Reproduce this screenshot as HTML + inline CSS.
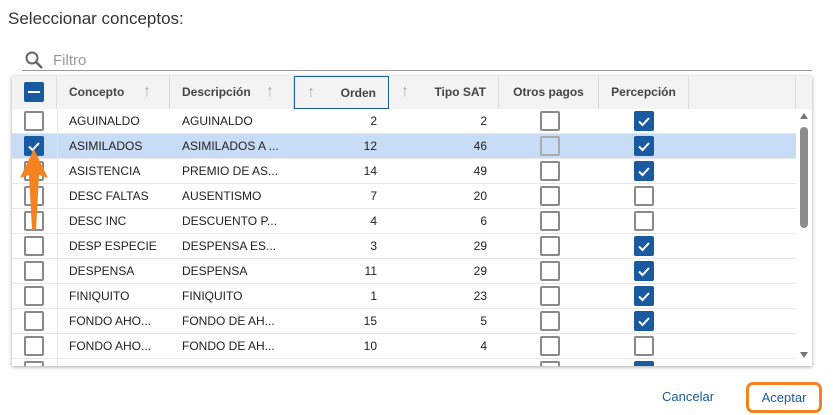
<!DOCTYPE html>
<html><head><style>
body{margin:0;width:833px;height:415px;background:#fff;font-family:"Liberation Sans",sans-serif;position:relative;overflow:hidden;color:#212121}
.a{position:absolute}
.title{left:8px;top:9px;font-size:17px;color:#333}
.grid{left:12px;top:76px;width:800px;height:290px;box-shadow:0 1px 4px rgba(0,0,0,.35);overflow:hidden;background:#fff}
.hdr{left:0;top:0;width:800px;height:33px;background:#f3f3f3;border-bottom:1px solid #ddd}
.hc{position:absolute;top:0;height:33px;line-height:32px;font-size:12px;font-weight:bold;color:#444;border-right:1px solid #ddd;box-sizing:border-box}
.row{position:absolute;left:0;width:784px;height:25px;border-bottom:1px solid #e6e6e6;box-sizing:border-box;font-size:12px;line-height:24px}
.c{position:absolute;top:0}
.cb{position:absolute;width:16px;height:16px;border:2px solid #8a8a8a;border-radius:2px;top:2px;background:#fff}
.ck{position:absolute;width:20px;height:20px;background:#1a5aa0;border-radius:2px;top:2px}
.ar{color:#aaa;font-weight:normal;position:absolute;font-size:16px}
</style></head><body>
<div class="a title">Seleccionar conceptos:</div>
<svg class="a" style="left:24px;top:50px" width="22" height="22"><circle cx="8" cy="8" r="5.5" fill="none" stroke="#666" stroke-width="2"/><line x1="12" y1="12" x2="18" y2="18" stroke="#666" stroke-width="2.5"/></svg>
<div class="a" style="left:53px;top:52px;font-size:15px;color:#999">Filtro</div>
<div class="a" style="left:22px;top:70px;width:790px;height:1px;background:#999"></div>
<div class="a grid">
 <div class="a hdr">
  <div class="hc" style="left:0;width:45px"><div class="ck" style="left:12px;top:6px"><div style="position:absolute;left:4px;top:9px;width:12px;height:2px;background:#fff"></div></div></div>
  <div class="hc" style="left:45px;width:113px;padding-left:12px">Concepto<span class="ar" style="left:86px">↑</span></div>
  <div class="hc" style="left:158px;width:124px;padding-left:12px">Descripción<span class="ar" style="left:96px">↑</span></div>
  <div class="hc" style="left:282px;width:95px;border:1px solid #1a5aa0;text-align:right;padding-right:12px">Orden<span class="ar" style="left:12px">↑</span></div>
  <div class="hc" style="left:377px;width:110px;text-align:right;padding-right:12px">Tipo SAT<span class="ar" style="left:12px">↑</span></div>
  <div class="hc" style="left:487px;width:100px;text-align:center">Otros pagos</div>
  <div class="hc" style="left:587px;width:90px;text-align:center">Percepción</div>
  <div class="hc" style="left:677px;width:107px"></div>
 </div>
 <div id="rows"></div>
 <div class="a" style="left:784px;top:33px;width:16px;height:257px;background:#fff"></div>
 <div class="a" style="left:788px;top:37px;width:0;height:0;border-left:4px solid transparent;border-right:4px solid transparent;border-bottom:6px solid #777"></div>
 <div class="a" style="left:788px;top:51px;width:8px;height:101px;border-radius:4px;background:#8c8c8c"></div>
 <div class="a" style="left:788px;top:276px;width:0;height:0;border-left:4px solid transparent;border-right:4px solid transparent;border-top:6px solid #777"></div>
</div>
<svg class="a" style="left:20px;top:148px" width="30" height="90"><path d="M14 1 L28 30 L19 27 L16 82 L12 82 L9 27 L0 30 Z" fill="#f58220"/></svg>
<div class="a" style="left:662px;top:389px;font-size:13px;color:#1a5aa0">Cancelar</div>
<div class="a" style="left:746px;top:382px;width:70px;height:25px;border:3px solid #f58220;border-radius:7px;box-sizing:content-box;font-size:13px;color:#1a5aa0;text-align:center;line-height:25px">Aceptar</div>
<script>
var d=[["AGUINALDO","AGUINALDO",2,2,1],["ASIMILADOS","ASIMILADOS A ...",12,46,1],["ASISTENCIA","PREMIO DE AS...",14,49,1],["DESC FALTAS","AUSENTISMO",7,20,0],["DESC INC","DESCUENTO P...",4,6,0],["DESP ESPECIE","DESPENSA ES...",3,29,1],["DESPENSA","DESPENSA",11,29,1],["FINIQUITO","FINIQUITO",1,23,1],["FONDO AHO...","FONDO DE AH...",15,5,1],["FONDO AHO...","FONDO DE AH...",10,4,0],["","","","",1]];
var ckm='<svg width="20" height="20" style="position:absolute;left:0;top:0"><path d="M5 10.5 L8.5 14 L15 7" fill="none" stroke="#fff" stroke-width="2"/></svg>';
var h='';d.forEach(function(r,i){var sel=i==1;
h+='<div class="row" style="top:'+(33+i*25)+'px;background:'+(sel?'#c8dcf5':'#fff')+'">'+
'<div class="c" style="left:0;width:45px;height:25px;border-right:1px solid #e6e6e6">'+(sel?'<div class="ck" style="left:12px">'+ckm+'</div>':'<div class="cb" style="left:12px"></div>')+'</div>'+
'<div class="c" style="left:57px">'+r[0]+'</div><div class="c" style="left:170px">'+r[1]+'</div>'+
'<div class="c" style="left:282px;width:83px;text-align:right">'+r[2]+'</div><div class="c" style="left:377px;width:98px;text-align:right">'+r[3]+'</div>'+
'<div class="cb" style="left:528px'+(sel?';border-color:#aaa;background:transparent':'')+'"></div>'+
(r[4]?'<div class="ck" style="left:622px">'+ckm+'</div>':'<div class="cb" style="left:622px"></div>')+'</div>';});
document.getElementById('rows').innerHTML=h;
</script>
</body></html>
